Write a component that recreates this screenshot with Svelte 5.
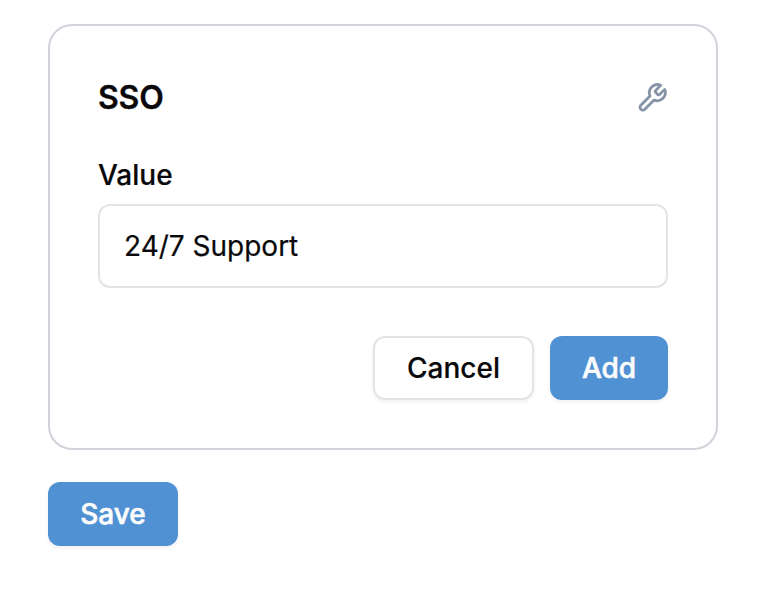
<script>
  let value = $state('24/7 Support');
</script>

<main>
  <section class="card">
    <header>
      <h2>SSO</h2>
      <svg class="wrench" viewBox="0 0 24 24" aria-hidden="true">
        <path d="M14.7 6.3a1 1 0 0 0 0 1.4l1.6 1.6a1 1 0 0 0 1.4 0l3.77-3.77a6 6 0 0 1-7.94 7.94l-6.91 6.91a2.12 2.12 0 0 1-3-3l6.91-6.91a6 6 0 0 1 7.94-7.94l-3.76 3.76z" />
      </svg>
    </header>
    <label for="value">Value</label>
    <input id="value" type="text" bind:value />
    <div class="actions">
      <button class="outline">Cancel</button>
      <button class="primary add">Add</button>
    </div>
  </section>
  <button class="primary save">Save</button>
</main>

<style>
  :global(body) {
    background: #fff;
  }
  main {
    box-sizing: border-box;
    padding: 24px 48px;
    font-family: Inter, sans-serif;
    color: #09090b;
    display: flex;
    flex-direction: column;
    align-items: flex-start;
    gap: 32px;
  }
  .card {
    box-sizing: border-box;
    width: 100%;
    height: 426px;
    border: 2px solid #d1d3da;
    border-radius: 24px;
    padding: 48px;
    display: flex;
    flex-direction: column;
  }
  header {
    display: flex;
    justify-content: space-between;
    align-items: center;
    height: 48px;
  }
  h2 {
    margin: 0;
    font-size: 32px;
    line-height: 48px;
    font-weight: 600;
    letter-spacing: -0.2px;
    -webkit-text-stroke: 0.3px currentColor;
  }
  .wrench {
    width: 32px;
    height: 32px;
    fill: none;
    stroke: #8793a6;
    stroke-width: 2.1;
    stroke-linecap: round;
    stroke-linejoin: round;
  }
  label {
    margin-top: 39px;
    font-size: 28px;
    line-height: 28px;
    font-weight: 500;
    -webkit-text-stroke: 0.2px currentColor;
  }
  input {
    box-sizing: border-box;
    width: 100%;
    height: 84px;
    margin: 15px 0 0;
    padding: 0 24px;
    border: 2px solid #e4e4e5;
    border-radius: 12px;
    background: #fff;
    font: 400 28px/40px Inter, sans-serif;
    color: inherit;
    outline: none;
    -webkit-text-stroke: 0.2px currentColor;
  }
  .actions {
    display: flex;
    justify-content: flex-end;
    gap: 16px;
    margin-top: 48px;
  }
  button {
    box-sizing: border-box;
    height: 64px;
    padding: 0;
    border: 0;
    border-radius: 12px;
    font: 500 28px/40px Inter, sans-serif;
    box-shadow: 0 2px 4px rgb(0 0 0 / 0.06);
    -webkit-text-stroke: 0.2px currentColor;
  }
  .outline {
    width: 161px;
    border: 2px solid #e4e4e5;
    background: #fff;
    color: inherit;
  }
  .primary {
    background: #4f91d3;
    color: #fcfcfc;
    -webkit-text-stroke: 0.6px currentColor;
  }
  .add {
    width: 118px;
  }
  .save {
    width: 130px;
  }
</style>
